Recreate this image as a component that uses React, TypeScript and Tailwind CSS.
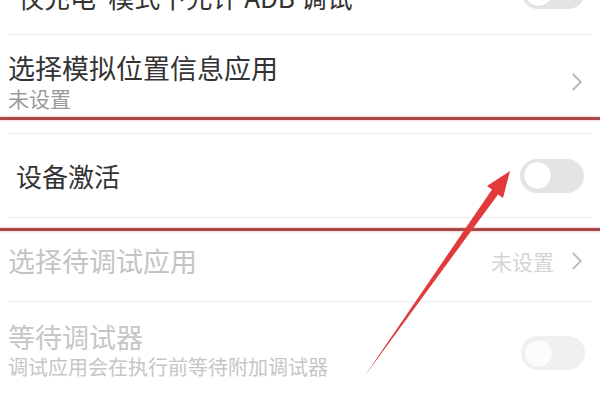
import { ChevronRight } from 'lucide-react'

function Toggle({ faded = false }: { faded?: boolean }) {
  return (
    <div className={`flex h-[34px] w-[64px] items-center rounded-full px-[3px] ${faded ? 'bg-[#f0f0f0]' : 'bg-[#e4e4e4]'}`}>
      <div className={`h-[29px] w-[29px] rounded-full border ${faded ? 'border-[#eeeeee] bg-[#fcfcfc]' : 'border-[#dddddd] bg-white'}`} />
    </div>
  )
}

function Divider() {
  return <div className="mx-[8px] h-px bg-[#ececec]" />
}

function RedLine() {
  return <div className="h-[3px] bg-[#a84a4a] shadow-[0_0_3px_rgba(220,80,80,0.5)]" />
}

export default function App() {
  return (
    <div className="relative h-[400px] w-[600px] overflow-hidden bg-white" style={{ fontFamily: '"Noto Sans CJK SC", "Noto Sans", sans-serif' }}>
      {/* row cut off at the top */}
      <div className="-mt-[40px] flex h-[74px] items-center justify-between pl-[18px] pr-[15px]">
        <span className="text-[26px] leading-[30px] text-[#333]">仅充电"模式下允许 ADB 调试</span>
        <div className="-mt-[10px]">
          <Toggle />
        </div>
      </div>
      <Divider />

      <div className="flex h-[82px] items-center justify-between pl-[8px] pr-[8px]">
        <div className="flex flex-col pt-[12px]">
          <span className="text-[27px] leading-[32px] text-[#333]">选择模拟位置信息应用</span>
          <span className="text-[21px] leading-[28px] text-[#9a9a9a]">未设置</span>
        </div>
        <ChevronRight size={30} strokeWidth={1.5} className="mt-[12px] text-[#b8b8b8]" />
      </div>
      <RedLine />

      <div className="h-[13px]" />
      <Divider />
      <div className="flex h-[83px] items-center justify-between pl-[16px] pr-[16px]">
        <span className="text-[26px] leading-[32px] text-[#333]">设备激活</span>
        <Toggle />
      </div>
      <Divider />
      <div className="h-[10px]" />
      <RedLine />

      <div className="flex h-[70px] items-center justify-between pl-[8px] pr-[8px]">
        <span className="-mt-[10px] text-[27px] leading-[32px] text-[#c4c4c4]">选择待调试应用</span>
        <div className="-mt-[10px] flex items-center gap-[8px]">
          <span className="text-[21px] leading-[26px] text-[#d4d4d4]">未设置</span>
          <ChevronRight size={30} strokeWidth={1.5} className="text-[#bdbdbd]" />
        </div>
      </div>
      <Divider />

      <div className="flex h-[98px] items-center justify-between pl-[8px] pr-[15px]">
        <div className="flex flex-col">
          <span className="text-[27px] leading-[32px] text-[#c6c6c6]">等待调试器</span>
          <span className="text-[20px] leading-[28px] text-[#c6c6c6]">调试应用会在执行前等待附加调试器</span>
        </div>
        <div className="mt-[4px]">
          <Toggle faded />
        </div>
      </div>

      {/* annotation arrow */}
      <svg className="pointer-events-none absolute left-0 top-0" width="600" height="400" viewBox="0 0 600 400">
        <polygon points="510,171 487,186 492,189.6 364,377 498,194.4 503,198" fill="#e23a3a" />
      </svg>
    </div>
  )
}
